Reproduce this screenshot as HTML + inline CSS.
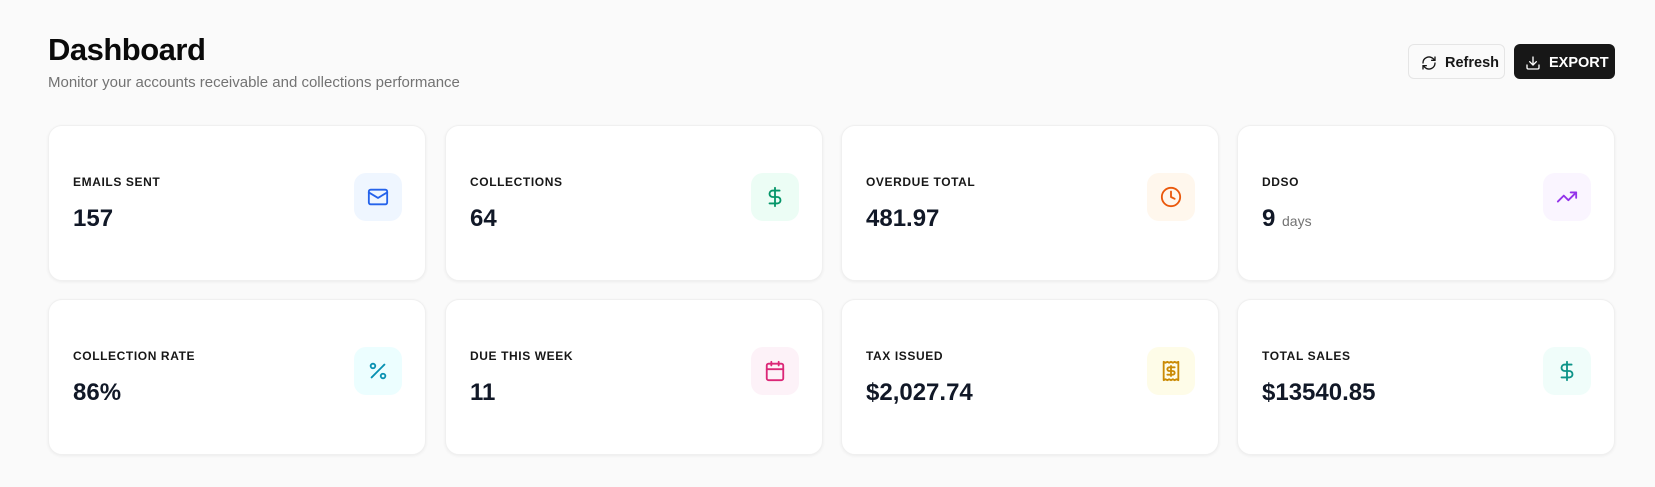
<!DOCTYPE html>
<html><head><meta charset="utf-8"><style>
*{box-sizing:border-box;margin:0;padding:0}
body{width:1655px;height:487px;background:#fafafa;font-family:"Liberation Sans",sans-serif;position:relative;overflow:hidden}
h1{position:absolute;left:48px;top:32px;font-size:31px;font-weight:700;color:#0a0a0a;letter-spacing:-0.5px}
.sub{position:absolute;left:48px;top:74px;font-size:15px;color:#737373}
.btn{position:absolute;top:44px;height:35px;border-radius:6px;display:flex;align-items:center;font-size:14.5px;font-weight:600;padding-top:3px}
.r{left:1408px;width:97px;border:1px solid #e5e5e5;background:#fafafa;color:#171717;padding-left:12px;gap:8px}
.e{left:1514px;width:101px;background:#171717;color:#fff;padding-left:11px;gap:8px}
.card{position:absolute;width:378px;height:156px;background:#fff;border-radius:14px;border:1px solid #f0f0f0;box-shadow:0 1px 3px rgba(0,0,0,.06)}
.lab{position:absolute;left:24px;top:49px;font-size:12px;font-weight:700;letter-spacing:.6px;color:#171717}
.val{position:absolute;left:24px;top:79px;font-size:24px;font-weight:700;color:#111827}
.val small{font-size:14px;font-weight:400;color:#737373}
.ic{position:absolute;right:23px;top:47px;width:48px;height:48px;border-radius:12px;display:flex;align-items:center;justify-content:center}
.ic svg{width:22px;height:22px;fill:none;stroke-width:2;stroke-linecap:round;stroke-linejoin:round}
</style></head><body>
<h1>Dashboard</h1>
<div class="sub">Monitor your accounts receivable and collections performance</div>
<div class="btn r"><svg width="16" height="16" viewBox="0 0 24 24" fill="none" stroke="#171717" stroke-width="2" stroke-linecap="round" stroke-linejoin="round"><path d="M3 12a9 9 0 0 1 15-6.7L21 8"/><path d="M21 3v5h-5"/><path d="M21 12a9 9 0 0 1-15 6.7L3 16"/><path d="M8 16H3v5"/></svg>Refresh</div>
<div class="btn e"><svg width="16" height="16" viewBox="0 0 24 24" fill="none" stroke="#fff" stroke-width="2" stroke-linecap="round" stroke-linejoin="round"><path d="M21 15v4a2 2 0 0 1-2 2H5a2 2 0 0 1-2-2v-4"/><path d="M7 10l5 5 5-5"/><path d="M12 15V3"/></svg>EXPORT</div>

<div class="card" style="left:48px;top:125px"><div class="lab">EMAILS SENT</div><div class="val">157</div><div class="ic" style="background:#eff6ff"><svg viewBox="0 0 24 24" stroke="#2563eb"><rect x="2" y="4" width="20" height="16" rx="2"/><path d="M22 7l-10 6L2 7"/></svg></div></div>
<div class="card" style="left:445px;top:125px"><div class="lab">COLLECTIONS</div><div class="val">64</div><div class="ic" style="background:#ecfdf5"><svg viewBox="0 0 24 24" stroke="#059669"><path d="M12 2v20"/><path d="M17 5H9.5a3.5 3.5 0 0 0 0 7h5a3.5 3.5 0 0 1 0 7H6"/></svg></div></div>
<div class="card" style="left:841px;top:125px"><div class="lab">OVERDUE TOTAL</div><div class="val">481.97</div><div class="ic" style="background:#fff7ed"><svg viewBox="0 0 24 24" stroke="#ea580c"><circle cx="12" cy="12" r="10"/><path d="M12 6v6l4 2"/></svg></div></div>
<div class="card" style="left:1237px;top:125px"><div class="lab">DDSO</div><div class="val">9 <small>days</small></div><div class="ic" style="background:#faf5ff"><svg viewBox="0 0 24 24" stroke="#9333ea"><path d="M22 7l-8.5 8.5-5-5L2 17"/><path d="M16 7h6v6"/></svg></div></div>

<div class="card" style="left:48px;top:299px"><div class="lab">COLLECTION RATE</div><div class="val">86%</div><div class="ic" style="background:#ecfeff"><svg viewBox="0 0 24 24" stroke="#0891b2"><path d="M19 5L5 19"/><circle cx="6.5" cy="6.5" r="2.5"/><circle cx="17.5" cy="17.5" r="2.5"/></svg></div></div>
<div class="card" style="left:445px;top:299px"><div class="lab">DUE THIS WEEK</div><div class="val">11</div><div class="ic" style="background:#fdf2f8"><svg viewBox="0 0 24 24" stroke="#db2777"><rect x="3" y="4" width="18" height="18" rx="2"/><path d="M16 2v4M8 2v4M3 10h18"/></svg></div></div>
<div class="card" style="left:841px;top:299px"><div class="lab">TAX ISSUED</div><div class="val">$2,027.74</div><div class="ic" style="background:#fefce8"><svg viewBox="0 0 24 24" stroke="#ca8a04"><path d="M4 2v20l2-1 2 1 2-1 2 1 2-1 2 1 2-1 2 1V2l-2 1-2-1-2 1-2-1-2 1-2-1-2 1Z"/><path d="M16 8h-6a2 2 0 1 0 0 4h4a2 2 0 1 1 0 4H8"/><path d="M12 17.5v-11"/></svg></div></div>
<div class="card" style="left:1237px;top:299px"><div class="lab">TOTAL SALES</div><div class="val">$13540.85</div><div class="ic" style="background:#f0fdfa"><svg viewBox="0 0 24 24" stroke="#0d9488"><path d="M12 2v20"/><path d="M17 5H9.5a3.5 3.5 0 0 0 0 7h5a3.5 3.5 0 0 1 0 7H6"/></svg></div></div>
</body></html>
